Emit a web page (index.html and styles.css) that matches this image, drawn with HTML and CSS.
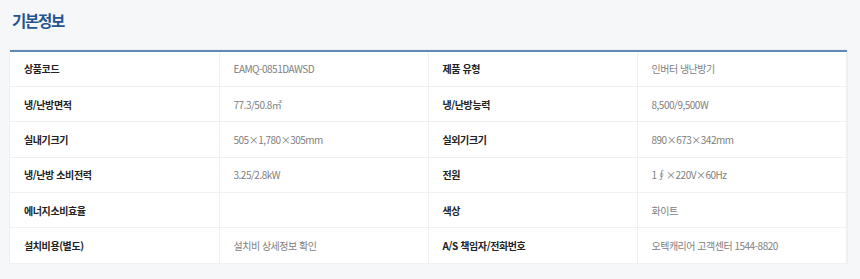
FILE: index.html
```html
<!DOCTYPE html>
<html lang="ko">
<head>
<meta charset="utf-8">
<link rel="stylesheet" href="styles.css">
</head>
<body>
<section class="spec">
  <h2 class="spec-title">기본정보</h2>
  <table class="spec-table">
    <tr><th>상품코드</th><td>EAMQ-0851DAWSD</td><th>제품 유형</th><td>인버터 냉난방기</td></tr>
    <tr><th>냉/난방면적</th><td>77.3/50.8㎡</td><th>냉/난방능력</th><td>8,500/9,500W</td></tr>
    <tr><th>실내기크기</th><td>505×1,780×305mm</td><th>실외기크기</th><td>890×673×342mm</td></tr>
    <tr><th>냉/난방 소비전력</th><td>3.25/2.8kW</td><th>전원</th><td>1∮×220V×60Hz</td></tr>
    <tr><th>에너지소비효율</th><td></td><th>색상</th><td>화이트</td></tr>
    <tr><th>설치비용(별도)</th><td>설치비 상세정보 확인</td><th>A/S 책임자/전화번호</th><td>오텍캐리어 고객센터 1544-8820</td></tr>
  </table>
</section>
</body>
</html>
```

FILE: styles.css
```css
html, body {
  margin: 0;
  padding: 0;
  background: #f6f7f9;
}
body {
  font-family: "Noto Sans CJK KR", "Noto Sans", sans-serif;
  width: 860px;
  height: 279px;
  overflow: hidden;
}
.spec {
  padding: 8px 14px 0 10px;
}
.spec-title {
  margin: 0 0 0 2px;
  font-size: 15.5px;
  line-height: 24px;
  font-weight: 700;
  color: #24538f;
  letter-spacing: -1.3px;
}
.spec-table {
  margin-top: 18px;
  width: 836px;
  border-collapse: collapse;
  table-layout: fixed;
  background: #fff;
  border-top: 2px solid #5f8bb3;
  box-shadow: 0 0 0 1px #eef0f3;
}
.spec-table tr {
  height: 35.4px;
}
.spec-table th,
.spec-table td {
  padding: 0 14px;
  font-size: 10px;
  text-align: left;
  vertical-align: middle;
  border-bottom: 1px solid #eef0f3;
  width: 209px;
  box-sizing: border-box;
}
.spec-table th {
  font-weight: 700;
  color: #222;
  letter-spacing: -0.4px;
}
.spec-table td {
  font-weight: 400;
  color: #808080;
  letter-spacing: -0.5px;
  border-left: 1px solid #eef0f3;
  border-right: 1px solid #eef0f3;
}
.spec-table tr:last-child th,
.spec-table tr:last-child td {
  border-bottom: none;
}
```
